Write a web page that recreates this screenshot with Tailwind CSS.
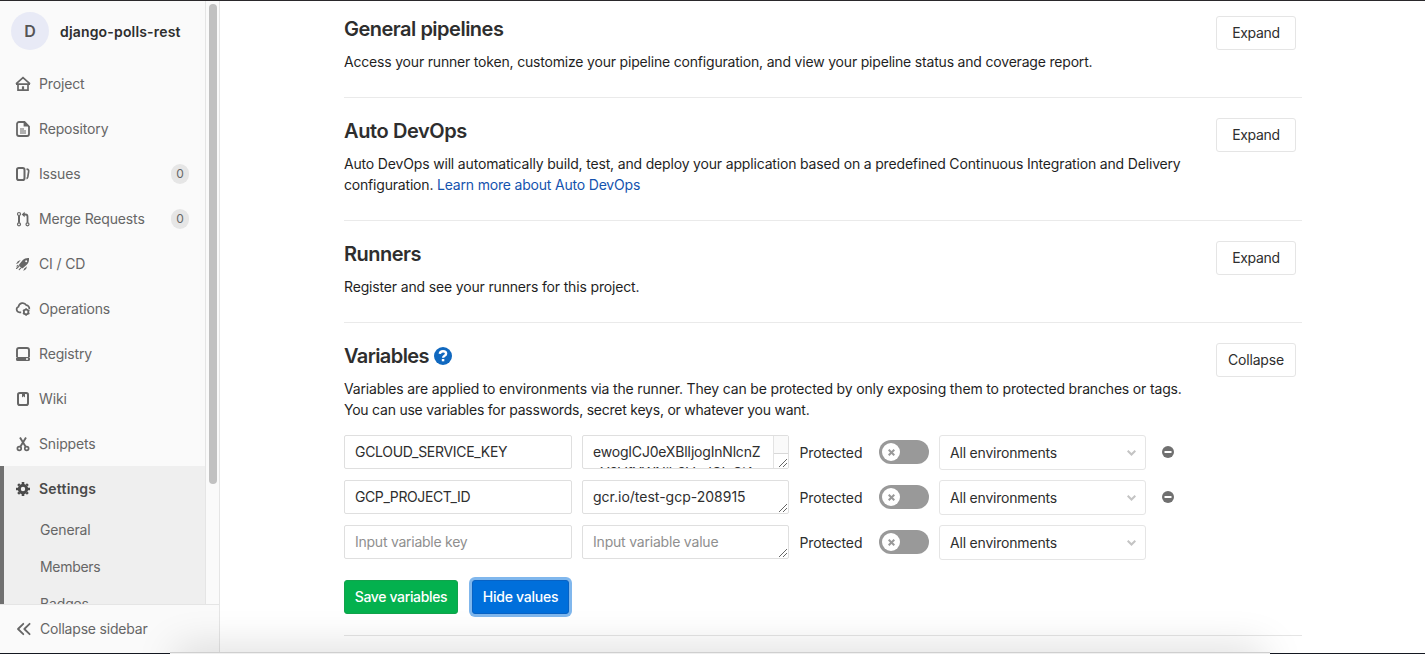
<!DOCTYPE html>
<html lang="en">
<head>
<meta charset="utf-8">
<title>CI / CD Settings</title>
<script src="https://cdn.jsdelivr.net/npm/@tailwindcss/browser@4"></script>
</head>
<body class="relative h-[654px] w-[1425px] overflow-hidden bg-white font-[Inter,Roboto,sans-serif] text-[14px] leading-[21px] text-[#2e2e2e]">
<div class="flex h-full border-t border-[#2a282b]">

  <!-- Sidebar -->
  <aside class="flex w-[220px] shrink-0 flex-col border-r border-[#e5e5e5] bg-[#fafafa] text-[#666] tracking-[-0.15px]">
    <div class="flex h-[603px] overflow-hidden">
      <div class="w-[206px] shrink-0 border-r border-[#e5e5e5]">
        <div class="flex h-[60px] items-center pl-[11px]">
          <div class="flex size-[38px] items-center justify-center rounded-full bg-[#e8eaf6] text-[16px] font-semibold text-[#555]">D</div>
          <span class="ml-[11px] whitespace-nowrap font-semibold tracking-[0.17px] text-[#2e2e2e]">django-polls-rest</span>
        </div>
        <nav class="whitespace-nowrap">
          <a class="flex h-[45px] items-center gap-2 pl-[15px]">
            <svg class="size-4" viewBox="0 0 16 16" fill="none" stroke="currentColor" stroke-width="1.7"><path d="M1 7.9 8 1.7l7 6.2M1 8.1h14M3 8v6.1h10V8"/><path d="M8 10.3v3.5" stroke-width="2.2"/></svg>
            <span>Project</span></a>
          <a class="flex h-[45px] items-center gap-2 pl-[15px]">
            <svg class="size-4" viewBox="0 0 16 16" fill="none" stroke="currentColor" stroke-width="1.8"><path d="M9.500 1H4a2 2 0 0 0-2 2v10a2 2 0 0 0 2 2h8a2 2 0 0 0 2-2V5.500zM9.500 1v3.500h4"/><path d="M5 8h4M5 10h6M5 12h6" stroke-width="1"/></svg>
            <span>Repository</span></a>
          <a class="flex h-[45px] items-center gap-2 pl-[15px]">
            <svg class="size-4" viewBox="0 0 16 16" fill="none" stroke="currentColor" stroke-width="2"><rect x="2" y="2" width="7.500" height="12" rx="1.800"/><path d="M11.500 3.200c2 .2 2.500 1 2.100 2.700l-.8 5c-.2 1-.6 1.500-1.300 1.700" stroke-width="1.700"/></svg>
            <span>Issues</span>
            <span class="ml-auto mr-4 flex h-5 w-[18px] items-center justify-center rounded-full bg-[#e6e6e6] text-[12px]">0</span></a>
          <a class="flex h-[45px] items-center gap-2 pl-[15px]">
            <svg class="size-4" viewBox="0 0 16 16" fill="none" stroke="currentColor" stroke-width="1.200"><circle cx="4" cy="3" r="1.500"/><circle cx="4" cy="13.300" r="1.500"/><circle cx="12.500" cy="13.300" r="1.500"/><path d="M4 4.500v7.300" stroke-width="2"/><path d="M8 3.500h2.500c1.300 0 2 .7 2 2v6.300" stroke-width="1.800"/><path d="M9.700.8v5.400L6.700 3.500z" fill="currentColor" stroke="none"/></svg>
            <span>Merge Requests</span>
            <span class="ml-auto mr-4 flex h-5 w-[18px] items-center justify-center rounded-full bg-[#e6e6e6] text-[12px]">0</span></a>
          <a class="flex h-[45px] items-center gap-2 pl-[15px]">
            <svg class="size-4" viewBox="0 0 16 16"><path fill="currentColor" fill-rule="evenodd" d="M14 2c-2.700-.2-4.700.5-6.200 2.100L4.300 8.300c-.8 1-.2 1.300.4 1.900l1.500 1.500c.6.600.9 1 1.800.3l4-3.500C13.600 7 14.200 5 14 2zm-2.800 2.300a1 1 0 1 1 0 2 1 1 0 0 1 0-2zM5.700 4.100 2.900 5.200 1 7.900l2.200-.6zM12 10.300l-.9 2.700-2.700 1.900.6-2.100z"/><path fill="none" stroke="currentColor" stroke-linecap="round" stroke-width="1.100" d="m3.900 10.300-2.400 2.200M5.700 12.200l-1.500 1.500M3 9.300l-1 .9"/></svg>
            <span>CI / CD</span></a>
          <a class="flex h-[45px] items-center gap-2 pl-[15px]">
            <svg class="size-4" viewBox="0 0 16 16" fill="none" stroke="currentColor"><path stroke-width="1.700" d="M6.200 11.300H4.500A2.900 2.900 0 0 1 3.500 5.700 4.200 4.200 0 0 1 11.300 4.200a3.500 3.500 0 0 1 3 4"/><circle cx="11.100" cy="11" r="2.300" stroke-width="1.800"/><path stroke-width="1.500" d="M11.100 7.300v1.500M11.100 13.200v1.600M7.900 9.200l1.300.7M13 12.100l1.400.8M7.900 12.900l1.300-.8M13 9.900l1.400-.7"/></svg>
            <span>Operations</span></a>
          <a class="flex h-[45px] items-center gap-2 pl-[15px]">
            <svg class="size-4" viewBox="0 0 16 16"><path fill="none" stroke="currentColor" stroke-width="1.900" d="M2 11V4a2 2 0 0 1 2-2h8a2 2 0 0 1 2 2v7"/><path fill="currentColor" fill-rule="evenodd" d="M2.500 11h11a1.500 1.500 0 0 1 1.500 1.500v1a1.500 1.500 0 0 1-1.500 1.500h-11A1.500 1.500 0 0 1 1 13.500v-1A1.500 1.500 0 0 1 2.500 11zM11 12.300v1.400h2v-1.400z"/></svg>
            <span>Registry</span></a>
          <a class="flex h-[45px] items-center gap-2 pl-[15px]">
            <svg class="size-4" viewBox="0 0 16 16"><rect x="3" y="2" width="10" height="12" rx="1.800" fill="none" stroke="currentColor" stroke-width="2"/><path fill="currentColor" d="M7 2h3v4.500L8.500 5.300 7 6.500z"/></svg>
            <span>Wiki</span></a>
          <a class="flex h-[45px] items-center gap-2 pl-[15px]">
            <svg class="size-4" viewBox="0 0 16 16" fill="none" stroke="currentColor"><circle cx="4.300" cy="12.500" r="1.900" stroke-width="1.700"/><circle cx="11.700" cy="12.500" r="1.900" stroke-width="1.700"/><path stroke-width="1.900" d="m5 1.500 5.700 9.300M11 1.500l-5.700 9.300"/></svg>
            <span>Snippets</span></a>
          <div class="border-l-4 border-[#707070] bg-[#efefef]">
            <a class="flex h-[45px] items-center gap-2 pl-[11px] font-semibold tracking-[0.2px] text-[#4a4a4a]">
              <svg class="size-4" viewBox="0 0 16 16" fill="none" stroke="currentColor"><circle cx="8" cy="8" r="3.700" stroke-width="3"/><path stroke-width="2.600" d="M8 1v2M8 13v2M1 8h2M13 8h2M3.100 3.100l1.300 1.300M11.600 11.600l1.300 1.300M3.100 12.900l1.300-1.300M11.600 4.400l1.300-1.300"/></svg>
              <span>Settings</span></a>
            <a class="flex h-[37px] items-center pl-9">General</a>
            <a class="flex h-[37px] items-center pl-9 tracking-[-0.3px]">Members</a>
            <a class="flex h-[37px] items-center pl-9">Badges</a>
          </div>
        </nav>
      </div>
      <div class="ml-[3px] mt-[3px] h-[480px] w-2 rounded-full bg-[#c1c1c1]"></div>
    </div>
    <a class="flex h-[50px] items-center gap-2 border-t border-[#e5e5e5] pb-0.5 pl-4">
      <svg class="size-4" viewBox="0 0 16 16" fill="none" stroke="currentColor" stroke-width="1.800" stroke-linecap="round" stroke-linejoin="round"><path d="M7.300 2.800 2 8l5.300 5.200M13.600 2.800 8.300 8l5.300 5.200"/></svg>
      <span class="whitespace-nowrap tracking-[-0.2px]">Collapse sidebar</span></a>
  </aside>

  <!-- Settings sections -->
  <main class="ml-[124px] flex w-[958px] flex-col whitespace-nowrap">
    <section class="flex h-[97px] items-start justify-between border-b border-[#eaeaea] pt-[15px]">
      <div>
        <h4 class="mb-[9px] text-[20px] font-semibold leading-[26px] tracking-[-0.5px]">General pipelines</h4>
        <p class="tracking-[-0.19px] text-[#1f1f1f]">Access your runner token, customize your pipeline configuration, and view your pipeline status and coverage report.</p>
      </div>
      <button class="mr-1.5 h-[34px] w-20 rounded-[3px] border border-[#e5e5e5] pb-0.5 tracking-[-0.3px]">Expand</button>
    </section>
    <section class="flex h-[123px] items-start justify-between border-b border-[#eaeaea] pt-5">
      <div>
        <h4 class="mb-[9px] text-[20px] font-semibold leading-[26px] tracking-[-0.4px]">Auto DevOps</h4>
        <p class="text-[#1f1f1f]"><span class="tracking-[-0.17px]">Auto DevOps will automatically build, test, and deploy your application based on a predefined Continuous Integration and Delivery</span><br><span class="tracking-[-0.19px]">configuration. <a class="text-[#1453ae]">Learn more about Auto DevOps</a></span></p>
      </div>
      <button class="mr-1.5 h-[34px] w-20 rounded-[3px] border border-[#e5e5e5] pb-0.5 tracking-[-0.3px]">Expand</button>
    </section>
    <section class="flex h-[102px] items-start justify-between border-b border-[#eaeaea] pt-5">
      <div>
        <h4 class="mb-[9px] text-[20px] font-semibold leading-[26px] tracking-[-0.5px]">Runners</h4>
        <p class="tracking-[-0.16px] text-[#1f1f1f]">Register and see your runners for this project.</p>
      </div>
      <button class="mr-1.5 h-[34px] w-20 rounded-[3px] border border-[#e5e5e5] pb-0.5 tracking-[-0.3px]">Expand</button>
    </section>
    <section class="h-[313px] border-b border-[#e5e5e5] pt-5">
      <div class="flex h-[92px] items-start justify-between">
        <div>
          <h4 class="mb-[9px] flex items-center gap-[5px] text-[20px] font-semibold leading-[26px]"><span class="tracking-[-0.6px]">Variables</span>
            <svg class="-mt-px size-[18px]" viewBox="0 0 18 18"><circle cx="9" cy="9" r="9" fill="#1068bf"/><path fill="none" stroke="#fff" stroke-width="2.400" d="M5.800 6.800C6 5 7.200 4.200 9 4.200c1.900 0 3.100 1 3.100 2.500 0 2.200-3 2-3 4.100"/><path fill="#fff" d="M7.800 12h2.500v2.300H7.800z"/></svg></h4>
          <p class="text-[#1f1f1f]"><span class="tracking-[-0.165px]">Variables are applied to environments via the runner. They can be protected by only exposing them to protected branches or tags.</span><br><span class="tracking-[-0.23px]">You can use variables for passwords, secret keys, or whatever you want.</span></p>
        </div>
        <button class="mr-1.5 h-[34px] w-20 rounded-[3px] border border-[#e5e5e5] pb-0.5 tracking-[-0.2px]">Collapse</button>
      </div>

      <div class="flex h-[45px] items-start">
        <div class="flex h-[34px] w-[228px] items-center rounded-[2px] border border-[#dfdfdf] px-2.5 pb-px"><span class="tracking-[-0.3px]">GCLOUD_SERVICE_KEY</span></div>
        <div class="relative ml-2.5 h-[34px] w-[207px] overflow-hidden rounded-[2px] border border-[#dfdfdf] px-2.5 pt-[5px] tracking-[-0.2px]">
          <span>ewogICJ0eXBlIjogInNlcnZ</span><br><span>pY2VfYWNjb3VudCIsCiAg</span>
          <div class="absolute right-0 top-0 h-full w-[15px] border-l border-[#e3e3e3] bg-white"><div class="h-[18px] border-b border-[#d8d8d8] bg-[#fafafa]"></div></div>
          <svg class="absolute bottom-px right-px size-2" viewBox="0 0 8 8" stroke="#555" stroke-width=".9"><path d="M0 8 8 0M4 8l4-4"/></svg>
        </div>
        <span class="ml-[10.500px] w-[79.500px] pt-[7px] tracking-[-0.15px]">Protected</span>
        <div class="mt-[5px] flex h-6 w-[50px] items-center rounded-full bg-[#999] pl-[3px]"><div class="flex size-[18px] items-center justify-center rounded-full bg-white"><svg class="size-[7px]" viewBox="0 0 7 7" stroke="#999" stroke-width="2"><path d="m.7.7 5.600 5.600M6.300.7.7 6.300"/></svg></div></div>
        <div class="ml-2.5 flex h-[35px] w-[207px] items-center justify-between rounded-[3px] border border-[#e5e5e5] pl-2.5 pr-[9px]"><span class="tracking-[-0.2px]">All environments</span><svg class="h-[6px] w-[9px]" viewBox="0 0 9 6" fill="none" stroke="#c4c4c4" stroke-width="2"><path d="m.7.7 3.800 3.800L8.300.7"/></svg></div>
        <svg class="ml-4 mt-[11px] size-3" viewBox="0 0 12 12"><circle cx="6" cy="6" r="6" fill="#707070"/><path fill="#fff" d="M2.500 5h7v2h-7z"/></svg>
      </div>
      <div class="flex h-[45px] items-start">
        <div class="flex h-[34px] w-[228px] items-center rounded-[2px] border border-[#dfdfdf] px-2.5 pb-px"><span class="tracking-[-0.4px]">GCP_PROJECT_ID</span></div>
        <div class="relative ml-2.5 h-[34px] w-[207px] overflow-hidden rounded-[2px] border border-[#dfdfdf] px-2.5 pt-[5px]">
          <span>gcr.io/test-gcp-208915</span>
          <svg class="absolute bottom-px right-px size-2" viewBox="0 0 8 8" stroke="#555" stroke-width=".9"><path d="M0 8 8 0M4 8l4-4"/></svg>
        </div>
        <span class="ml-[10.500px] w-[79.500px] pt-[7px] tracking-[-0.15px]">Protected</span>
        <div class="mt-[5px] flex h-6 w-[50px] items-center rounded-full bg-[#999] pl-[3px]"><div class="flex size-[18px] items-center justify-center rounded-full bg-white"><svg class="size-[7px]" viewBox="0 0 7 7" stroke="#999" stroke-width="2"><path d="m.7.7 5.600 5.600M6.300.7.7 6.300"/></svg></div></div>
        <div class="ml-2.5 flex h-[35px] w-[207px] items-center justify-between rounded-[3px] border border-[#e5e5e5] pl-2.5 pr-[9px]"><span class="tracking-[-0.2px]">All environments</span><svg class="h-[6px] w-[9px]" viewBox="0 0 9 6" fill="none" stroke="#c4c4c4" stroke-width="2"><path d="m.7.7 3.800 3.800L8.300.7"/></svg></div>
        <svg class="ml-4 mt-[11px] size-3" viewBox="0 0 12 12"><circle cx="6" cy="6" r="6" fill="#707070"/><path fill="#fff" d="M2.500 5h7v2h-7z"/></svg>
      </div>
      <div class="flex h-[45px] items-start">
        <div class="flex h-[34px] w-[228px] items-center rounded-[2px] border border-[#dfdfdf] px-2.5 pb-px text-[#8f8f8f]"><span class="tracking-[-0.25px]">Input variable key</span></div>
        <div class="relative ml-2.5 h-[34px] w-[207px] overflow-hidden rounded-[2px] border border-[#dfdfdf] px-2.5 pt-[5px] text-[#8f8f8f]">
          <span class="tracking-[-0.2px]">Input variable value</span>
          <svg class="absolute bottom-px right-px size-2" viewBox="0 0 8 8" stroke="#555" stroke-width=".9"><path d="M0 8 8 0M4 8l4-4"/></svg>
        </div>
        <span class="ml-[10.500px] w-[79.500px] pt-[7px] tracking-[-0.15px]">Protected</span>
        <div class="mt-[5px] flex h-6 w-[50px] items-center rounded-full bg-[#999] pl-[3px]"><div class="flex size-[18px] items-center justify-center rounded-full bg-white"><svg class="size-[7px]" viewBox="0 0 7 7" stroke="#999" stroke-width="2"><path d="m.7.7 5.600 5.600M6.300.7.7 6.300"/></svg></div></div>
        <div class="ml-2.5 flex h-[35px] w-[207px] items-center justify-between rounded-[3px] border border-[#e5e5e5] pl-2.5 pr-[9px]"><span class="tracking-[-0.2px]">All environments</span><svg class="h-[6px] w-[9px]" viewBox="0 0 9 6" fill="none" stroke="#c4c4c4" stroke-width="2"><path d="m.7.7 3.800 3.800L8.300.7"/></svg></div>
      </div>

      <div class="mt-2.5 flex gap-3.5 font-medium tracking-[-0.35px] text-white">
        <button class="h-[34px] w-[114px] rounded-[3px] border border-[#12a34c] bg-[#04b14e] pb-0.5">Save variables</button>
        <button class="h-[34px] w-[97px] rounded-[3px] border border-[#0862c4] bg-[#006fdb] pb-0.5 tracking-[-0.25px] shadow-[0_0_0_3px_#80b7ed]">Hide values</button>
      </div>
    </section>
  </main>
</div>

<!-- Window edge and the soft shadow above it -->
<div class="pointer-events-none absolute bottom-0 left-0 h-px w-full bg-[#141821]"></div>
<div class="pointer-events-none absolute bottom-0 left-[120px] h-[60px] w-[1200px] overflow-hidden">
  <div class="absolute -bottom-5 left-[60px] h-5 w-[1080px] shadow-[0_0_40px_4px_rgba(0,0,0,0.17)]"></div>
</div>
<div class="pointer-events-none absolute bottom-0 left-[170px] h-0.5 w-[1100px] border-t border-[#cfcfcf] bg-[#f0f0f0]"></div>
</body>
</html>
